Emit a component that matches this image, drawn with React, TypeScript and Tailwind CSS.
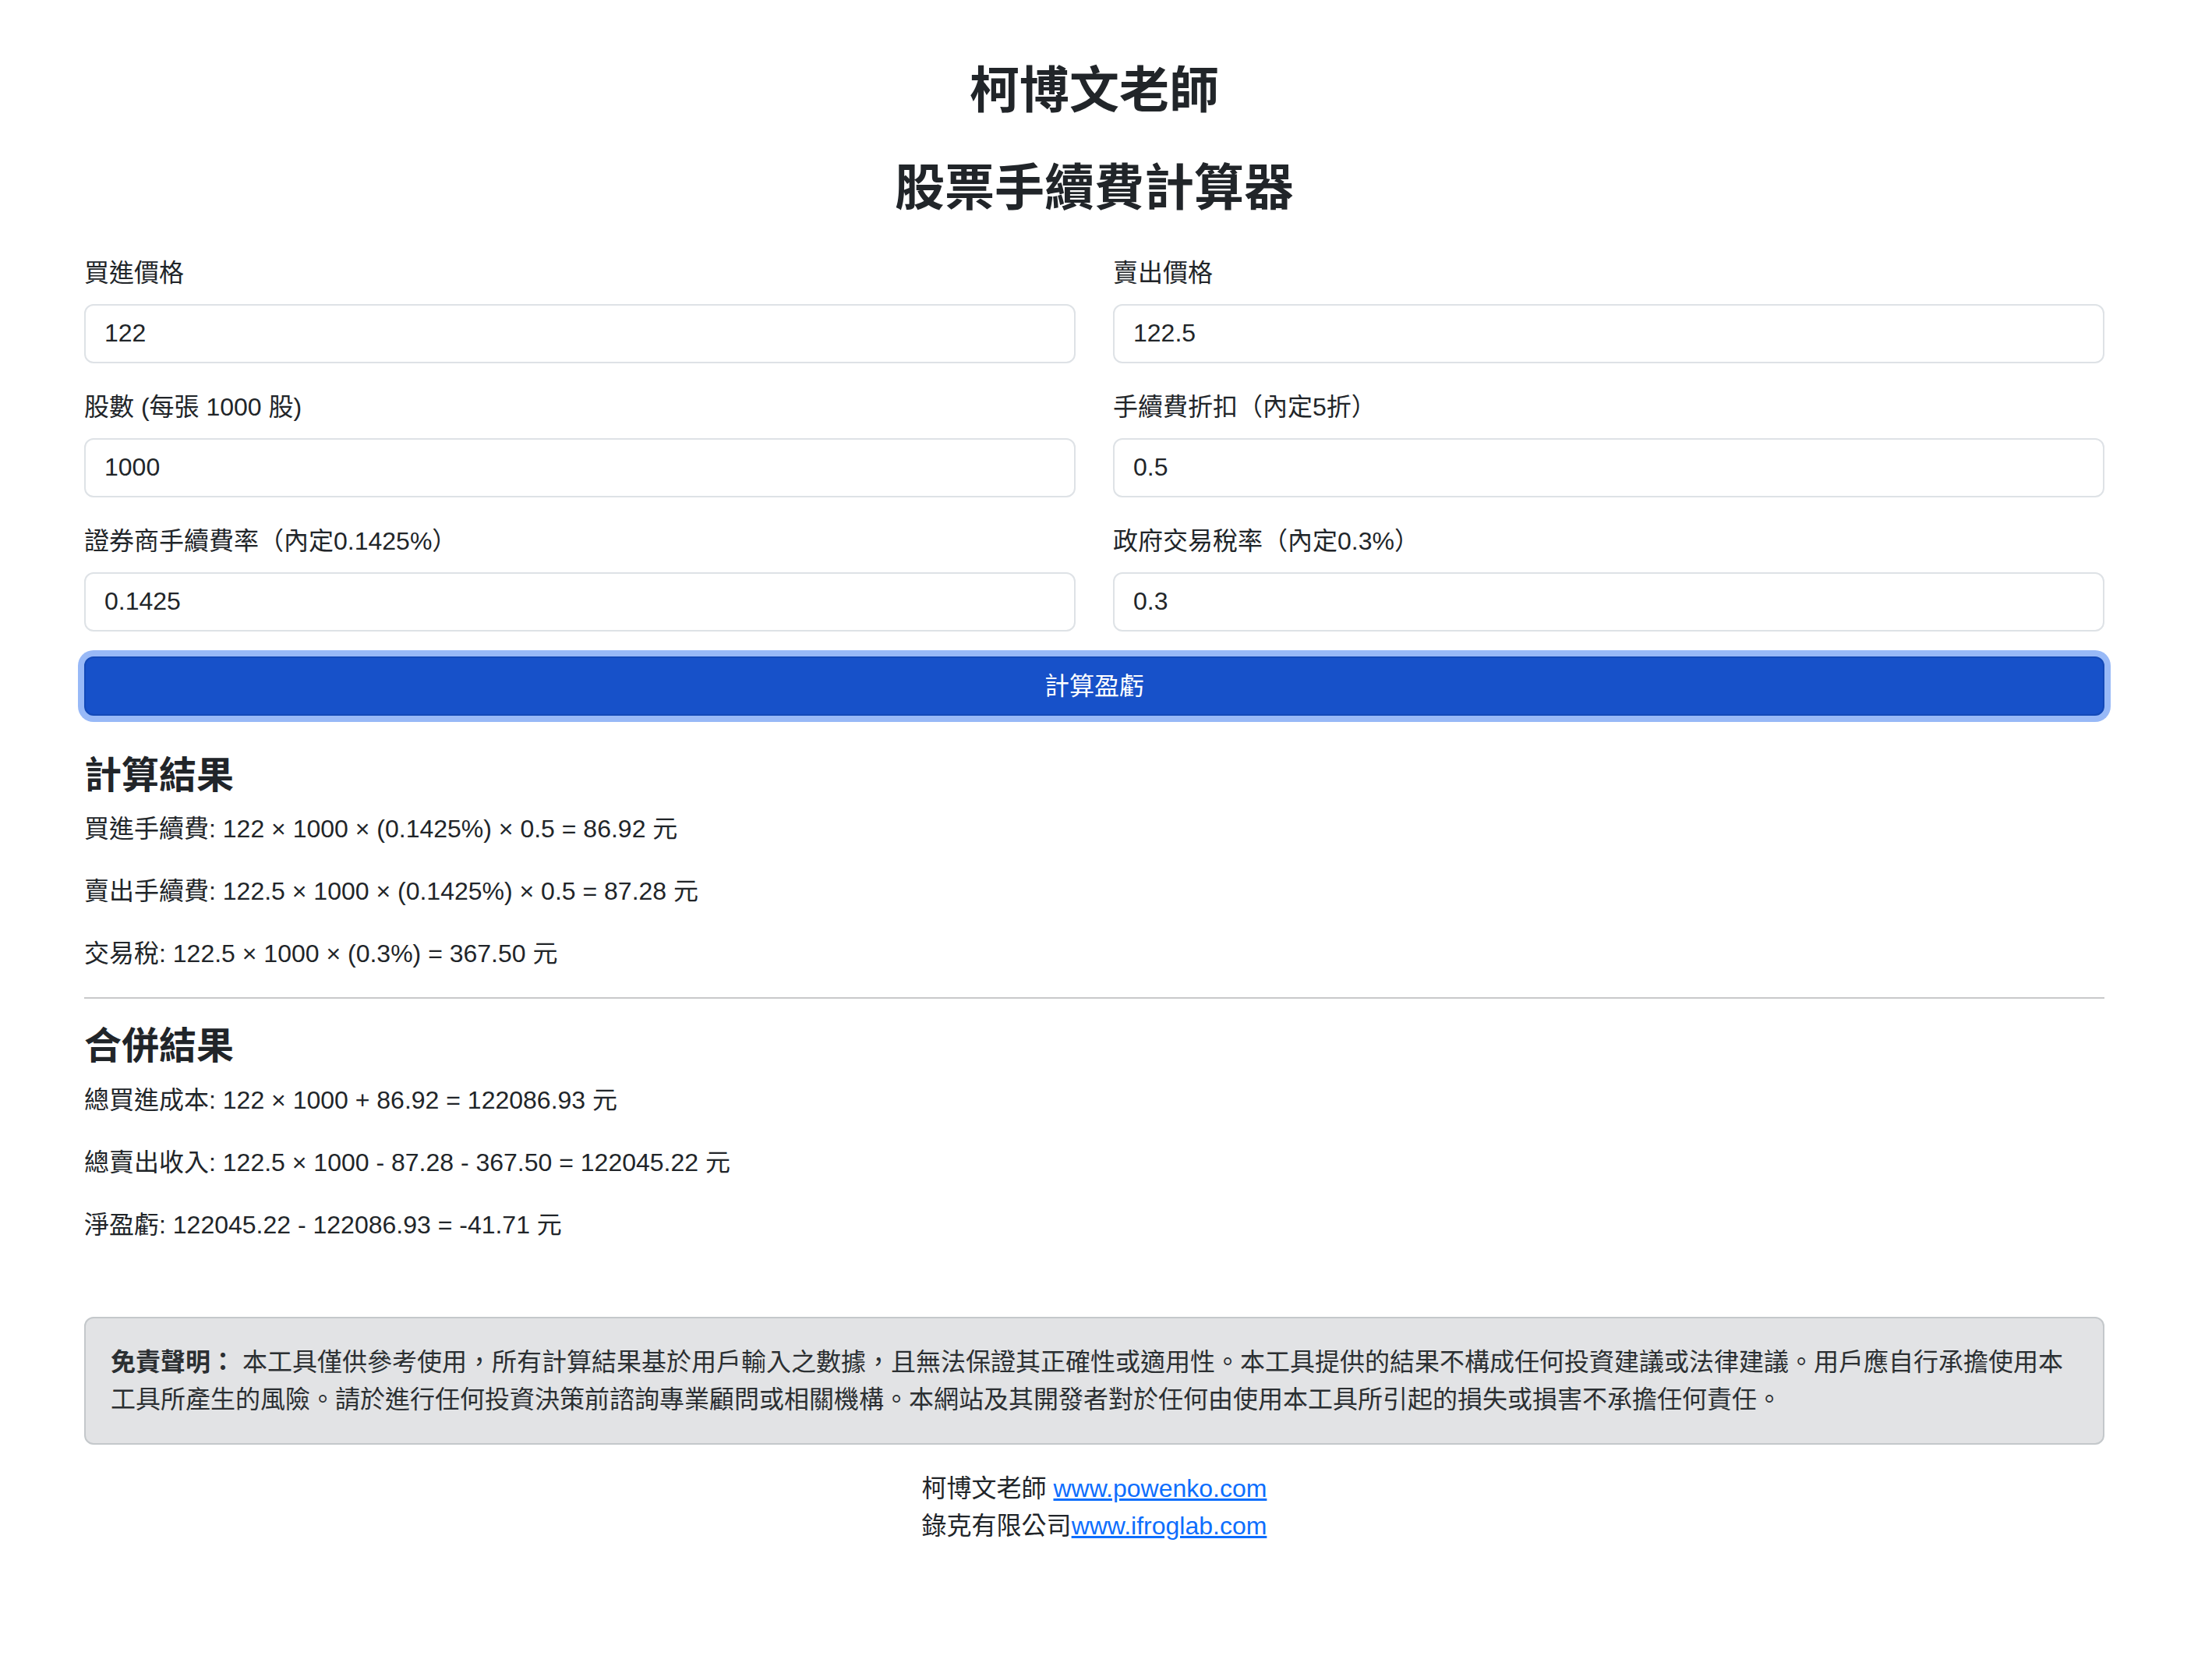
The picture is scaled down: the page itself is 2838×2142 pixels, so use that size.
import React from "react";

interface Field {
  label: string;
  value: string;
}

const fields: Field[] = [
  { label: "買進價格", value: "122" },
  { label: "賣出價格", value: "122.5" },
  { label: "股數 (每張 1000 股)", value: "1000" },
  { label: "手續費折扣（內定5折）", value: "0.5" },
  { label: "證券商手續費率（內定0.1425%）", value: "0.1425" },
  { label: "政府交易稅率（內定0.3%）", value: "0.3" },
];

const feeLines = [
  "買進手續費: 122 × 1000 × (0.1425%) × 0.5 = 86.92 元",
  "賣出手續費: 122.5 × 1000 × (0.1425%) × 0.5 = 87.28 元",
  "交易稅: 122.5 × 1000 × (0.3%) = 367.50 元",
];

const totalLines = [
  "總買進成本: 122 × 1000 + 86.92 = 122086.93 元",
  "總賣出收入: 122.5 × 1000 - 87.28 - 367.50 = 122045.22 元",
  "淨盈虧: 122045.22 - 122086.93 = -41.71 元",
];

export default function App() {
  return (
    <div className="min-h-[2142px] bg-white text-[#212529] text-[32px] leading-[48px] font-['Liberation_Sans','Noto_Sans_CJK_TC',sans-serif]">
      <div className="ml-[108px] w-[2592px] pt-[78px] pb-[120px]">
        {/* Titles */}
        <h2 className="text-center text-[64px] leading-[1.2] font-bold">柯博文老師</h2>
        <h2 className="mt-[48px] mb-[46px] text-center text-[64px] leading-[1.2] font-bold">股票手續費計算器</h2>

        {/* Form */}
        <div className="grid grid-cols-2 gap-x-[48px]">
          {fields.map((f) => (
            <div key={f.label} className="mb-[32px]">
              <label className="block mb-[16px]">{f.label}</label>
              <input
                type="text"
                defaultValue={f.value}
                className="block w-full h-[76px] px-[24px] py-[12px] bg-white border-2 border-[#dee2e6] rounded-[12px] outline-none"
              />
            </div>
          ))}
        </div>

        <button className="block w-full h-[76px] rounded-[12px] bg-[#1751c9] border-2 border-[#1249b8] text-white shadow-[0_0_0_8px_#98b9f7]">
          計算盈虧
        </button>

        {/* Results */}
        <div className="mt-[48px]">
          <h4 className="mb-[16px] text-[48px] leading-[1.2] font-bold">計算結果</h4>
          {feeLines.map((l) => (
            <p key={l} className="mb-[32px]">{l}</p>
          ))}
          <hr className="my-[32px] border-0 border-t-2 border-[#c8c9ca]" />
          <h4 className="mb-[16px] text-[48px] leading-[1.2] font-bold">合併結果</h4>
          {totalLines.map((l) => (
            <p key={l} className="mb-[32px]">{l}</p>
          ))}
        </div>

        {/* Disclaimer */}
        <div className="mt-[94px] mb-[32px] p-[32px] bg-[#e2e3e5] border-2 border-[#c4c8cb] rounded-[12px] text-[#2b2f32]">
          <strong className="font-bold">免責聲明：</strong> 本工具僅供參考使用，所有計算結果基於用戶輸入之數據，且無法保證其正確性或適用性。本工具提供的結果不構成任何投資建議或法律建議。用戶應自行承擔使用本工具所產生的風險。請於進行任何投資決策前諮詢專業顧問或相關機構。本網站及其開發者對於任何由使用本工具所引起的損失或損害不承擔任何責任。
        </div>

        {/* Footer */}
        <div className="text-center">
          柯博文老師 <a href="#" className="text-[#0d6efd] underline">www.powenko.com</a>
          <br />
          錄克有限公司<a href="#" className="text-[#0d6efd] underline">www.ifroglab.com</a>
        </div>
      </div>
    </div>
  );
}
